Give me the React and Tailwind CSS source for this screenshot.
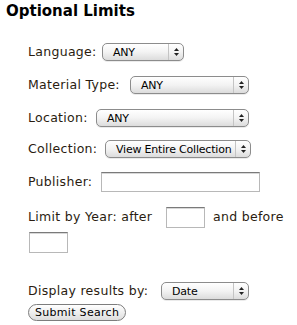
const font = { fontFamily: '"DejaVu Sans", Verdana, sans-serif' }

function FakeSelect({ value, width }) {
  return (
    <div
      className={`flex items-center h-[18px] rounded-[5px] border border-[#8c8c8c] bg-gradient-to-b from-white via-[#f3f3f3] to-[#dcdcdc] shadow-[0_1px_0_rgba(0,0,0,0.08)] ${width}`}
    >
      <span className="flex-1 pl-[10px] text-[11px] leading-none text-black tracking-[-0.2px] truncate">{value}</span>
      <span className="flex flex-col items-center justify-center w-[15px] h-full border-l border-[#c4c4c4] gap-[2px]">
        <svg width="5" height="3" viewBox="0 0 5 3"><path d="M2.5 0L5 3H0z" fill="#222" /></svg>
        <svg width="5" height="3" viewBox="0 0 5 3"><path d="M0 0h5L2.5 3z" fill="#222" /></svg>
      </span>
    </div>
  )
}

function TextBox({ width, height }) {
  return (
    <div className={`bg-white border border-[#b8b8b8] border-t-[#7a7a7a] shadow-[inset_0_1px_0_#d8d8d8] ${width} ${height}`} />
  )
}

export default function App() {
  return (
    <div className="w-[297px] h-[325px] bg-white text-[#2a1c10] overflow-hidden" style={font}>
      <h2 className="pl-[6px] pt-[1px] text-[15px] font-bold text-black leading-[20px]">Optional Limits</h2>

      <div className="pl-[28px] pt-[22px] text-[12.5px] tracking-[0.3px] whitespace-nowrap">
        <div className="flex items-center h-[18px]">
          <span className="w-[74px]">Language:</span>
          <FakeSelect value="ANY" width="w-[82px]" />
        </div>
        <div className="flex items-center h-[18px] mt-[15px]">
          <span className="w-[102px]">Material Type:</span>
          <FakeSelect value="ANY" width="w-[119px]" />
        </div>
        <div className="flex items-center h-[18px] mt-[15px]">
          <span className="w-[68px]">Location:</span>
          <FakeSelect value="ANY" width="w-[153px]" />
        </div>
        <div className="flex items-center h-[18px] mt-[13px]">
          <span className="w-[77px]">Collection:</span>
          <FakeSelect value="View Entire Collection" width="w-[146px]" />
        </div>
        <div className="flex items-center h-[20px] mt-[14px]">
          <span className="w-[73px]">Publisher:</span>
          <TextBox width="w-[159px]" height="h-[20px]" />
        </div>
        <div className="flex items-center h-[21px] mt-[15px]">
          <span className="w-[138px]">Limit by Year: after</span>
          <TextBox width="w-[39px]" height="h-[21px]" />
          <span className="ml-[8px]">and before</span>
        </div>
        <div className="mt-[4px] pl-[1px]">
          <TextBox width="w-[39px]" height="h-[21px]" />
        </div>
        <div className="flex items-center h-[18px] mt-[29px]">
          <span className="w-[133px]">Display results by:</span>
          <FakeSelect value="Date" width="w-[88px]" />
        </div>
        <button className="mt-[4px] h-[17px] px-[6px] rounded-full border border-[#7d7d7d] bg-gradient-to-b from-white to-[#dedede] text-[11px] leading-none text-black flex items-center">
          Submit Search
        </button>
      </div>
    </div>
  )
}
